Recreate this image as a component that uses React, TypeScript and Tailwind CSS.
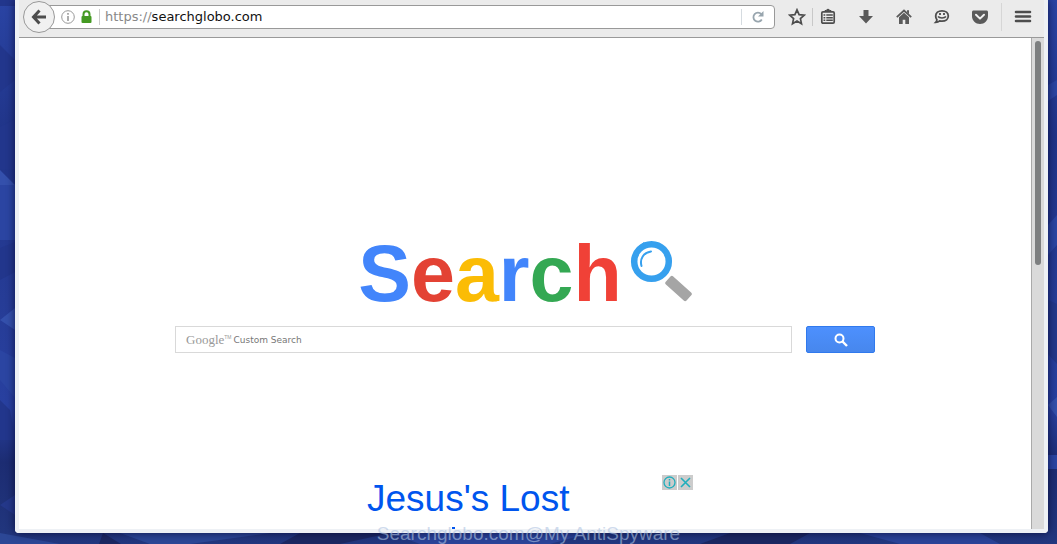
import type { ReactNode } from "react";

const logoLetters = [
  { char: "S", className: "text-[#4285fb]" },
  { char: "e", className: "text-[#e34234]" },
  { char: "a", className: "text-[#fbbc05]" },
  { char: "r", className: "text-[#4285fb]" },
  { char: "c", className: "text-[#34a853]" },
  { char: "h", className: "text-[#f04137]" },
];

const Wallpaper = () => (
  <svg
    className="absolute inset-0 h-full w-full"
    viewBox="0 0 1057 544"
    preserveAspectRatio="none"
    aria-hidden="true"
  >
    <defs>
      <linearGradient id="sky" x1="0" y1="0" x2="0" y2="1">
        <stop offset="0" stopColor="#2a44a4" />
        <stop offset="0.25" stopColor="#203488" />
        <stop offset="0.55" stopColor="#263c96" />
        <stop offset="0.75" stopColor="#2840a0" />
        <stop offset="0.85" stopColor="#1c2c72" />
        <stop offset="1" stopColor="#22377f" />
      </linearGradient>
    </defs>
    <path fill="url(#sky)" d="M0 0h1057v544H0z" />
    <path fill="#22368c" d="M0 0h15v6H0zM0 45l15 15v20L0 92zM0 127l15-8v50H0zM0 248l15-6v30l-15 8zM0 400l10 10 5 30H0z" />
    <path fill="#2b45a2" d="M0 185h15v55H0zM0 350l15 8v40L0 380zM1048 85l9-5v15l-9 6zM1048 225l9-10v30l-9 10zM1048 455h9v14h-9z" />
    <path fill="#3450ac" d="M0 320l15-12v22zM0 170l15 15H0zM1048 405l9-8v20z" />
    <path fill="#24388a" d="M0 505l15-10v20zM1048 300l9 4v60l-9-10z" />
    <path fill="#2c4796" d="M0 533l60 11H0zM120 533h150l-80 11h-40z" />
    <path fill="#1b2762" d="M103 533l18 11h-22zM300 533h90l-50 11h-60zM730 533h80l-20 11h-90z" />
    <path fill="#2b4398" d="M390 533h200l-40 11H420zM860 533h120l20 11H900z" />
  </svg>
);

const ToolButton = ({ label, className, children }: { label: string; className: string; children: ReactNode }) => (
  <button
    type="button"
    aria-label={label}
    className={`flex h-8 shrink-0 items-center justify-center text-[#4d4d4d] ${className}`}
  >
    <svg width="18" height="18" viewBox="0 0 18 18" fill="none" aria-hidden="true">
      {children}
    </svg>
  </button>
);

const Toolbar = () => (
  <div className="flex h-[38px] shrink-0 items-center border-b border-[#999] bg-[#ebebeb] pb-[3px] pl-1">
    <button
      type="button"
      aria-label="Back"
      className="z-10 flex h-8 w-8 shrink-0 items-center justify-center rounded-full border border-[#999] bg-[#f1f1f1]"
    >
      <svg width="16" height="16" viewBox="0 0 16 16" fill="none" stroke="#4d4d4d" strokeWidth="3" aria-hidden="true">
        <path d="M8.5 1.5L2.5 8l6 6.5M3 8h12" />
      </svg>
    </button>

    {/* Address bar */}
    <div className="-ml-4 flex h-6 min-w-0 flex-1 items-center rounded-r-sm border border-[#999] bg-white pl-[21px]">
      <svg className="shrink-0" width="14" height="14" viewBox="0 0 14 14" fill="none" stroke="#999" aria-hidden="true">
        <circle cx="7" cy="7" r="6.3" />
        <path d="M7 3v1.8M7 6v5" strokeWidth="1.6" />
      </svg>
      <svg className="ml-1.5 shrink-0" width="11" height="14" viewBox="0 0 11 14" fill="none" aria-hidden="true">
        <path d="M2.5 7V4.2a3 3 0 016 0V7" stroke="#459a23" strokeWidth="2" />
        <rect x="0.5" y="6" width="10" height="7" rx="1" fill="#459a23" />
      </svg>
      <span className="ml-[7px] h-4 w-px shrink-0 bg-[#ccc]" />
      <label htmlFor="address" className="ml-[5px] font-['DejaVu_Sans',sans-serif] text-[13px] leading-5 text-[#888]">
        https://
      </label>
      <input
        id="address"
        type="text"
        defaultValue="searchglobo.com"
        className="h-5 min-w-0 flex-1 bg-transparent font-['DejaVu_Sans',sans-serif] text-[13px] leading-5 text-[#111] outline-none"
      />
      <span className="h-4 w-px shrink-0 bg-[#d5dbe0]" />
      <button type="button" aria-label="Reload" className="flex h-5 w-8 shrink-0 items-center justify-center">
        <svg width="12" height="12" viewBox="0 0 12 12" fill="none" aria-hidden="true">
          <path d="M9.3 3.2A4.5 4.5 0 109.8 8.5" stroke="#98a5ae" strokeWidth="1.8" />
          <path d="M11.5 0v5.5H6z" fill="#98a5ae" />
        </svg>
      </button>
    </div>

    <ToolButton label="Bookmark this page" className="ml-[7px] w-[30px]">
      <path
        d="M9 1.8l2.1 4.8 5.2.5-3.9 3.5 1.1 5.1L9 13l-4.5 2.7 1.1-5.1-3.9-3.5 5.2-.5z"
        stroke="currentColor"
        strokeWidth="1.7"
      />
    </ToolButton>
    <span className="h-[18px] w-px shrink-0 bg-[#c8c8c8]" />
    <ToolButton label="Bookmarks" className="mr-1 w-[30px]">
      <rect x="2.8" y="3.8" width="12.4" height="11.4" rx="1.2" stroke="currentColor" strokeWidth="1.7" />
      <path d="M6 4V2.5h1.5L8 1.4h2l.5 1.1H12V4" fill="currentColor" stroke="currentColor" />
      <path d="M4.5 7h1.8M4.5 9.7h1.8M4.5 12.3h1.8M7.3 7h6.5M7.3 9.7h6.5M7.3 12.3h6.5" stroke="currentColor" strokeWidth="1.4" />
    </ToolButton>
    <ToolButton label="Downloads" className="w-[38px]">
      <path d="M6.5 2h5v6H16l-7 7.5L2 8h4.5z" fill="#5a5a5a" />
    </ToolButton>
    <ToolButton label="Home" className="w-[38px]">
      <path d="M1.8 9.2L9 2.5l7.2 6.7" stroke="#5a5a5a" strokeWidth="1.8" />
      <path d="M12 2.2h2v4l-2-2zM4 9.2l5-4.5 5 4.5V16h-3.7v-4.2H7.7V16H4z" fill="#5a5a5a" />
    </ToolButton>
    <ToolButton label="Chat" className="w-[38px]">
      <path
        d="M9 2.8c3.7 0 6.3 2.3 6.3 5.2S12.7 13.2 9 13.2c-.8 0-1.6-.1-2.3-.3-1 .9-2.3 1.5-4 1.5.8-.8 1.2-1.7 1.2-2.7C3.2 10.700 2.700 9.400 2.700 8c0-2.900 2.600-5.200 6.300-5.200z"
        stroke="currentColor"
        strokeWidth="1.8"
      />
      <path d="M7 5v2M11 5v2" stroke="currentColor" strokeWidth="1.8" />
      <path d="M5 8.500c1.500 1.900 6.500 1.900 8 0" stroke="currentColor" strokeWidth="1.600" />
    </ToolButton>
    <ToolButton label="Pocket" className="w-[38px]">
      <path d="M2.500 2.500h13c.8 0 1.500.6 1.500 1.500v4c0 4.500-3.500 8-8 8s-8-3.500-8-8V4c0-.9.7-1.500 1.500-1.500z" fill="#5a5a5a" />
      <path d="M5 6.800l4 3.800 4-3.800" stroke="#f1f1f1" strokeWidth="2" strokeLinecap="round" strokeLinejoin="round" />
    </ToolButton>
    <span className="ml-0.5 h-7 w-px shrink-0 bg-[#d6d6d6]" />
    <ToolButton label="Open menu" className="w-[42px]">
      <path d="M2 4h14M2 8.500h14M2 13h14" stroke="currentColor" strokeWidth="2.600" strokeLinecap="round" />
    </ToolButton>
  </div>
);

const Logo = () => (
  <div className="flex items-start justify-center gap-2">
    <h1 className="font-['Liberation_Sans',Arial,sans-serif] text-[79px] leading-[80px] font-bold">
      {logoLetters.map((letter) => (
        <span key={letter.char} className={letter.className}>
          {letter.char}
        </span>
      ))}
    </h1>
    <svg className="mt-1.5" width="62" height="62" viewBox="0 0 62 62" fill="none" aria-hidden="true">
      <circle cx="21.500" cy="21.500" r="17.300" stroke="#36a0ee" strokeWidth="6.500" />
      <path d="M9 6l5-4 2 3-5 4z" fill="#36a0ee" />
      <path d="M11.500 26c-2-7 2-13.500 9.500-14.500" stroke="#36a0ee" strokeWidth="2" strokeLinecap="round" />
      <rect x="-14" y="-5.500" width="28" height="11" rx="2" transform="translate(48.500 48.500) rotate(42)" fill="#a5a5a5" />
    </svg>
  </div>
);

const SearchForm = () => (
  <form
    className="mx-auto mt-3 flex w-full max-w-[700px] items-center gap-[14px]"
    onSubmit={(e) => e.preventDefault()}
  >
    <div className="flex h-[27px] min-w-0 flex-1 items-center border border-[#d9d9d9] bg-white pl-[10px]">
      <label htmlFor="query" className="flex items-center whitespace-nowrap">
        <span className="font-['Liberation_Serif',serif] text-[13px] text-[#999]">Google</span>
        <span className="mb-1 font-['Liberation_Sans',sans-serif] text-[5px] text-[#999]">TM</span>
        <span className="ml-0.5 pt-0.5 font-['DejaVu_Sans',sans-serif] text-[9px] text-[#777]">Custom Search</span>
      </label>
      <input id="query" type="text" className="h-6 min-w-0 flex-1 bg-transparent px-2 text-sm outline-none" />
    </div>
    <button
      type="submit"
      aria-label="Search"
      className="flex h-[27px] w-[69px] shrink-0 items-center justify-center rounded-[2px] border border-[#3079ed] bg-linear-to-b from-[#4d90fe] to-[#4787ed]"
    >
      <svg width="14" height="14" viewBox="0 0 14 14" fill="none" stroke="#fff" aria-hidden="true">
        <circle cx="5.500" cy="5.500" r="4" strokeWidth="2" />
        <path d="M8.500 8.500l4.500 4.500" strokeWidth="2.400" />
      </svg>
    </button>
  </form>
);

const Ad = () => (
  <div className="mx-auto mt-[122px] flex w-full max-w-[336px] items-start justify-between pl-[10px]">
    <div>
      <a href="#" className="block pt-1 font-['Liberation_Sans',Arial,sans-serif] text-[37px] leading-[40px] text-[#0055ee]">
        Jesus&apos;s Lost
      </a>
      <span className="mt-2 ml-[85px] block h-0.5 w-[3px] bg-[#0055ee]" />
    </div>
    <div className="flex gap-px">
      <button type="button" aria-label="Ad information" className="flex h-[15px] w-[15px] items-center justify-center bg-[#ccc]">
        <svg width="13" height="13" viewBox="0 0 13 13" fill="none" stroke="#20aebc" strokeWidth="1.300" aria-hidden="true">
          <circle cx="6.500" cy="6.500" r="5.500" />
          <path d="M6.500 3v1.500M6.500 5.500V10" strokeWidth="1.500" />
        </svg>
      </button>
      <button type="button" aria-label="Close ad" className="flex h-[15px] w-[15px] items-center justify-center bg-[#ccc]">
        <svg width="11" height="11" viewBox="0 0 11 11" fill="none" stroke="#20aebc" strokeWidth="1.600" aria-hidden="true">
          <path d="M1 1l9 9M10 1l-9 9" />
        </svg>
      </button>
    </div>
  </div>
);

const App = () => {
  return (
    <div className="relative flex h-screen flex-col overflow-hidden pr-[9px] pb-[11px] pl-[15px]">
      <Wallpaper />

      {/* Browser window */}
      <div className="relative flex min-h-0 flex-1 flex-col rounded-b border-x-4 border-b-4 border-[#eef1f5] bg-white shadow-[0_0_8px_rgba(0,0,40,0.7)]">
        <Toolbar />
        <div className="flex min-h-0 flex-1">
          <main className="min-w-0 flex-1 overflow-hidden px-4 pt-[196px]">
            <Logo />
            <SearchForm />
            <Ad />
          </main>
          <div className="w-[13px] shrink-0 border-l border-[#aaa] bg-[#dadada] px-[3px] pt-[3px]">
            <div className="h-[46%] w-1.5 rounded-full bg-[#7d7f80]" />
          </div>
        </div>
      </div>

      <p className="absolute inset-x-0 bottom-0 text-center font-['Liberation_Sans',Arial,sans-serif] text-[19px] leading-[20px] text-[#afc3e1]/60">
        Searchglobo.com@My AntiSpyware
      </p>
    </div>
  );
};

export default App;
